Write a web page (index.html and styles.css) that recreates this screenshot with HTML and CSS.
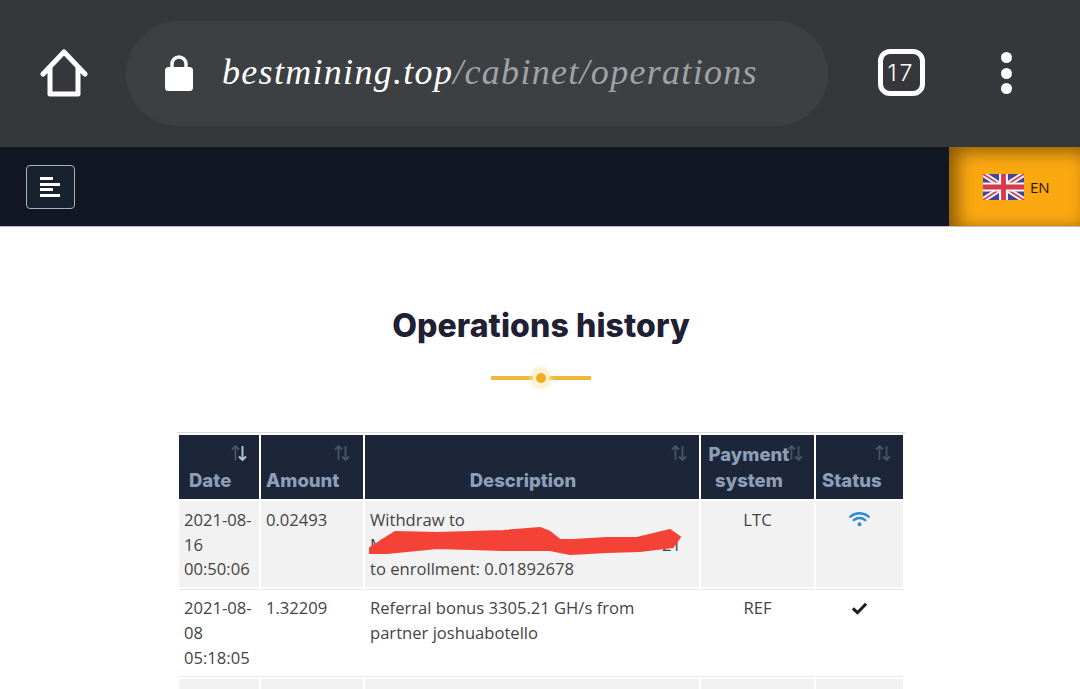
FILE: index.html
```html
<!DOCTYPE html>
<html lang="en">
<head>
<meta charset="utf-8">
<title>Operations history</title>
<link rel="stylesheet" href="styles.css">
</head>
<body>
<div class="browser">
  <svg class="home" viewBox="0 0 48 48" width="48" height="48"><path d="M3 25 24 3l21 22M10 19v26h28V19" fill="none" stroke="#fff" stroke-width="5" stroke-linecap="round" stroke-linejoin="round"/></svg>
  <div class="pill">
    <svg class="lock" viewBox="0 0 28 37" width="28" height="37"><path d="M7 17V10a7 7 0 0 1 14 0v7" fill="none" stroke="#fff" stroke-width="3.4"/><rect x="0" y="13" width="28" height="24" rx="3.5" fill="#fff"/></svg>
    <div class="url"><span class="host">bestmining.top</span><span class="path">/cabinet/operations</span></div>
  </div>
  <div class="tabs">17</div>
  <div class="dots"><i></i><i></i><i></i></div>
</div>
<header class="topbar">
  <button class="menu"><i class="short"></i><i></i><i class="short"></i><i></i></button>
  <div class="lang">
    <svg viewBox="0 0 60 38" width="41" height="26"><rect width="60" height="38" fill="#41479b"/><path d="M0 0 60 38M60 0 0 38" stroke="#f5f5f5" stroke-width="8"/><path d="M0 0 60 38M60 0 0 38" stroke="#d8394a" stroke-width="2.4"/><path d="M30 0v38M0 19h60" stroke="#f5f5f5" stroke-width="13"/><path d="M30 0v38M0 19h60" stroke="#d8394a" stroke-width="7"/></svg>
    <span>EN</span>
  </div>
</header>
<main class="content">
  <h1>Operations history</h1>
  <div class="divider"><span></span></div>
  <table class="ops">
    <thead>
      <tr>
        <th class="c-date start">Date<svg class="sort" viewBox="0 0 16 18"><use href="#arrows"/><path class="on" d="M11.5 2v14M8 12.500l3.500 3.500 3.500-3.500"/></svg></th>
        <th class="c-amt start">Amount<svg class="sort" viewBox="0 0 16 18"><use href="#arrows"/></svg></th>
        <th class="c-desc">Description<svg class="sort" viewBox="0 0 16 18"><use href="#arrows"/></svg></th>
        <th class="c-pay">Payment system<svg class="sort" viewBox="0 0 16 18"><use href="#arrows"/></svg></th>
        <th class="c-stat start">Status<svg class="sort" viewBox="0 0 16 18"><use href="#arrows"/></svg></th>
      </tr>
    </thead>
    <tbody>
      <tr class="odd">
        <td>2021-08-16 00:50:06</td>
        <td>0.02493</td>
        <td class="desc">Withdraw to <span class="hidden-addr"><span>MI</span><span>21</span></span> to enrollment: 0.01892678
          <svg class="scribble" viewBox="0 0 320 34" width="320" height="34"><path d="M5 22 22 11 30 6 72 7 138 5 175 2 185 6 195 14 208 14 242 12 272 12 305 4 315 11 308 21 275 25 242 26 205 28 185 24 138 24 72 22 22 27 5 27Z"/></svg>
        </td>
        <td class="mid">LTC</td>
        <td class="mid"><svg class="wifi" viewBox="0 0 22 16" width="21" height="16"><path d="M1.500 5.500C7 .8 15 .8 20.500 5.500M5 9.200c3.500-3 8.500-3 12 0" fill="none" stroke="#2d8bd6" stroke-width="2.600" stroke-linecap="round"/><circle cx="11" cy="13.500" r="2" fill="#2d8bd6"/></svg></td>
      </tr>
      <tr class="even">
        <td>2021-08-08 05:18:05</td>
        <td>1.32209</td>
        <td>Referral bonus 3305.21 GH/s from partner joshuabotello</td>
        <td class="mid">REF</td>
        <td class="mid"><svg class="check" viewBox="0 0 18 14" width="17" height="14"><path d="M2 7.500 6.800 12 16 2.500" fill="none" stroke="#1c1c1c" stroke-width="3.200"/></svg></td>
      </tr>
      <tr class="odd">
        <td>&nbsp;</td><td>&nbsp;</td><td>&nbsp;</td><td>&nbsp;</td><td>&nbsp;</td>
      </tr>
    </tbody>
  </table>
</main>
<svg class="defs" width="0" height="0"><defs><g id="arrows" fill="none" stroke="#45566c" stroke-width="1.800"><path d="M4.500 16V2M1 5.500 4.500 2 8 5.500M11.500 2v14M8 12.500l3.500 3.500 3.500-3.500"/></g></defs></svg>
</body>
</html>
```
FILE: styles.css
```css
* { box-sizing: border-box; }
html, body { margin: 0; padding: 0; height: 689px; overflow: hidden; background: #fff; }
body { font-family: "Open Sans", sans-serif; color: #444; }

.browser { height: 147px; background: #36373b; display: flex; align-items: center; padding: 0 0 0 40px; }
.home { flex: none; margin-top: -1px; }
.pill { width: 702px; height: 105px; margin-left: 38px; border-radius: 53px; background: #3d4043; display: flex; align-items: center; padding-left: 39px; }
.lock { flex: none; margin-right: 29px; margin-top: -3px; }
.url { font-family: "Liberation Serif", serif; font-style: italic; font-size: 36px; letter-spacing: 1.300px; white-space: nowrap; line-height: 1; margin-top: -3px; }
.host { color: #fff; }
.path { color: #a0a3a5; }
.tabs { width: 47px; height: 47px; margin-left: 50px; margin-top: -2px; border: 5px solid #fff; border-radius: 12px; color: #fff; font-size: 23px; font-weight: 300; font-family: Inter, sans-serif; display: flex; align-items: center; justify-content: center; letter-spacing: 3px; }
.dots { display: flex; flex-direction: column; gap: 4.500px; margin-left: 76px; margin-top: -1px; }
.dots i { width: 11px; height: 11px; border-radius: 50%; background: #fff; }

.topbar { height: 80px; background: #111824; border-bottom: 1px solid #b9bcc2; display: flex; align-items: center; justify-content: space-between; padding-left: 26px; }
.menu { width: 49px; height: 44px; margin-top: 1px; padding: 0 0 0 13px; background: #18222f; border: 1px solid #aab0b8; border-radius: 4px; display: flex; flex-direction: column; justify-content: center; align-items: flex-start; gap: 2.500px; }
.menu i { display: block; width: 20px; height: 3px; background: #fff; }
.menu i.short { width: 13px; }
.lang { width: 131px; height: 79px; background: #fca911; box-shadow: inset 8px 4px 18px 0 rgba(95, 60, 0, .75); display: flex; align-items: center; padding-left: 34px; gap: 6px; color: #2b1400; font-size: 15px; }

.content { display: flex; flex-direction: column; align-items: center; padding-top: 77px; }
h1 { margin: 0 0 0 2px; font-family: Inter, sans-serif; font-weight: 800; font-size: 32px; line-height: 44px; color: #1f2033; letter-spacing: .1px; }
.divider { width: 100px; height: 4px; margin-top: 28px; margin-bottom: 53px; margin-left: 2px; background: #f0b83a; display: flex; justify-content: center; align-items: center; }
.divider span { flex: none; width: 16px; height: 16px; border-radius: 50%; background: #f0ac1e; border: 3px solid #fff3d6; box-shadow: 0 0 5px 2px #fbe6b4; }

.ops { width: 728px; margin-left: 2px; table-layout: fixed; border-collapse: separate; border-spacing: 2px; border-top: 1px solid #d9dbde; font-size: 16.600px; line-height: 24.700px; margin-top: -1px; }
.ops th { position: relative; height: 64px; padding: 0 5px 6px; background: #1c2638; color: #8d9fb8; font-family: Inter, sans-serif; font-weight: 800; font-size: 18.500px; line-height: 26px; text-align: center; vertical-align: bottom; }
.ops th.start { text-align: left; }
.ops th.c-date { width: 80px; padding-left: 10px; }
.ops th.c-amt { width: 102px; }
.ops th.c-desc { width: 334px; padding-right: 23px; }
.ops th.c-pay { width: 113px; padding-right: 22px; }
.ops th.c-stat { width: 87px; padding-left: 6px; }
.sort { position: absolute; top: 9px; right: 12px; width: 16px; height: 18px; }
.sort .on { fill: none; stroke: #b4c3d6; stroke-width: 1.800; }
.c-pay .sort { right: 11px; }
.c-amt .sort { right: 13px; }

.ops td { height: 86px; padding: 7px 5px 5px; vertical-align: top; }
.ops tr.odd td { background: #f2f2f2; }
.ops tr.even td { border-top: 1px solid #e6e6e6; border-bottom: 1px solid #e6e6e6; height: 88px; padding-top: 6px; }
.ops td.mid { text-align: center; }
.ops td.desc { position: relative; }
.hidden-addr { display: inline-flex; justify-content: space-between; width: 311px; }
.scribble { position: absolute; left: 0; top: 25px; }
.scribble path { fill: #f44336; stroke: #f44336; stroke-width: 2; stroke-linejoin: round; }
.wifi { display: block; margin: 3px auto 0; }
.check { display: block; margin: 5px auto 0; }
.defs { position: absolute; }
```
